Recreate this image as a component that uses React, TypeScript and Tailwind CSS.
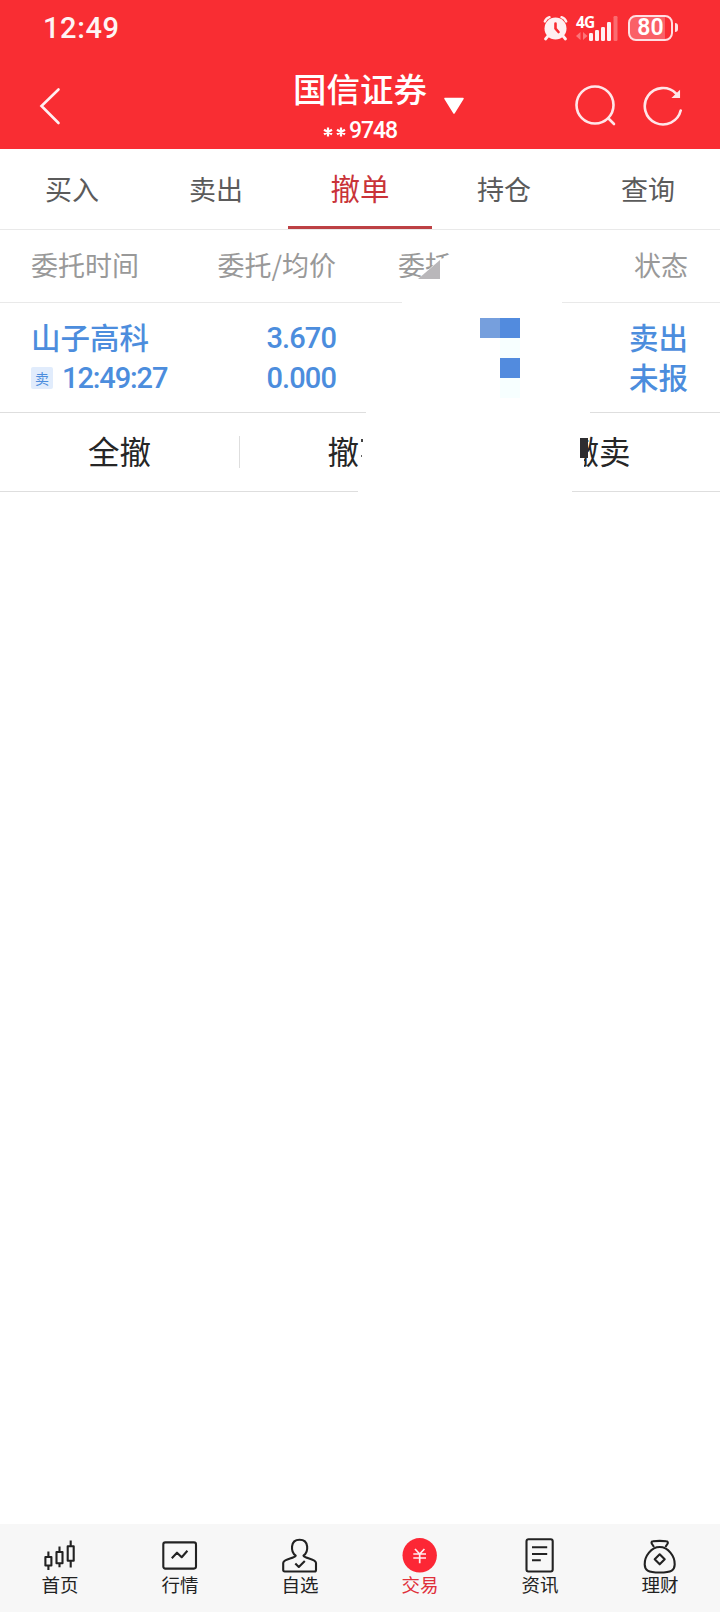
import React from 'react';

const TABS = ['买入', '卖出', '撤单', '持仓', '查询'];
const ACTIVE_TAB = '撤单';

const StatusBar: React.FC = () => (
  <div className="flex h-[55px] items-center pl-[43px] pr-[42px] text-white">
    <span className="mt-px font-[Roboto] text-[29px] font-medium leading-[29px] tracking-[0.6px] opacity-95">12:49</span>
    <div className="ml-auto flex items-center">
      <svg width="26" height="26" viewBox="0 0 26 26" fill="none" className="mr-[7px]">
        <circle cx="12.5" cy="13.5" r="11" fill="#fff0f2" />
        <path d="M1.8 6.5 Q3.2 3.2 6.5 2.2 M23.2 6.5 Q21.8 3.2 18.5 2.2" stroke="#fff0f2" strokeWidth="2.4" strokeLinecap="round" />
        <path d="M5 21 L2.5 24 M20 21 L22.5 24" stroke="#fff0f2" strokeWidth="2.8" strokeLinecap="round" />
        <path d="M12.5 8.5 V13.5 L15.5 17" stroke="#f92d33" strokeWidth="2.6" strokeLinecap="round" />
      </svg>
      <div className="relative mr-[9px] h-[26px] w-[43px]">
        <span className="absolute left-0 top-[-2px] font-['Open_Sans'] text-[15.5px] font-bold leading-[18px] tracking-[-0.8px]">4G</span>
        <svg width="43" height="26" viewBox="0 0 43 26" className="absolute inset-0">
          <path d="M4.5 17 V25 L0 21 Z M7 17 V25 L11.5 21 Z" fill="#fff" opacity=".35" />
          <g fill="#fff0f2">
            <rect x="13" y="18" width="4" height="8" rx="1.2" />
            <rect x="19" y="15" width="4" height="11" rx="1.2" />
            <rect x="25" y="12" width="4" height="14" rx="1.2" />
            <rect x="31" y="7" width="4" height="19" rx="1.2" />
          </g>
          <rect x="37.5" y="1" width="4" height="25" rx="1.2" fill="#fff" opacity=".3" />
        </svg>
      </div>
      <div className="flex h-[26px] w-[45px] items-center justify-center rounded-[8px] border-2 border-[#ffdfe2] bg-linear-to-r from-[#fa6067] from-85% to-[#f92d33] to-85% font-[Roboto] text-[23px] font-semibold leading-[22px]">
        80
      </div>
      <span className="ml-0.5 h-[9px] w-[3px] rounded-r-sm bg-[#ffdfe2]" />
    </div>
  </div>
);

const TitleBar: React.FC = () => (
  <div className="grid h-[94px] grid-cols-[240px_240px_240px] text-white">
    <svg width="24" height="40" viewBox="0 0 24 40" fill="none" className="ml-[38px] mt-[31px]">
      <path d="M20.5 3.5 L3.5 20 L20.5 37" stroke="#fff0f2" strokeWidth="2.6" strokeLinecap="round" />
    </svg>
    <div className="relative flex flex-col items-center">
      <h1 className="mt-[14px] text-[33.5px] font-medium leading-[38px]">国信证券</h1>
      <p className="mt-[12px] flex items-center font-[Roboto] text-[23px] font-medium leading-[24px] tracking-[-1.1px]">
        <svg width="24" height="10" viewBox="0 0 24 10" className="mr-[2px] mt-[2px]" stroke="#fff" strokeWidth="2.2">
          <path d="M5 0.5 V9.5 M1 2.7 L9 7.3 M9 2.7 L1 7.3 M18 0.5 V9.5 M14 2.7 L22 7.3 M22 2.7 L14 7.3" />
        </svg>
        9748
      </p>
      <svg width="22" height="18" viewBox="0 0 22 18" className="absolute left-[203px] top-[42px]">
        <path d="M2 1.5 H20 L11 16 Z" fill="#fff" stroke="#fff" strokeWidth="1.5" strokeLinejoin="round" />
      </svg>
    </div>
    <div className="flex pl-[94px] pt-[29px]">
      <svg width="44" height="44" viewBox="0 0 44 44" fill="none" stroke="#ffe6e9" strokeWidth="2.6" strokeLinecap="round">
        <circle cx="21" cy="21" r="18.5" />
        <path d="M34.5 34.5 L40 40" />
      </svg>
      <svg width="44" height="44" viewBox="0 0 44 44" fill="none" stroke="#ffe6e9" strokeWidth="2.6" strokeLinecap="round" className="ml-[24px]">
        <path d="M38.7 26.5 A18.2 18.2 0 1 1 34 9.5" />
        <path d="M37.3 7.5 V13.3 H31.3 Z" fill="#ffe6e9" strokeWidth="1.5" />
      </svg>
    </div>
  </div>
);

// Blanked-out order quantity, with the few mosaic blocks left on it
const Mask: React.FC = () => (
  <>
    <div className="absolute left-[402px] top-[302px] h-[2px] w-[160px] bg-white" />
    <div className="absolute left-[366px] top-[411px] h-[3px] w-[224px] bg-white" />
    <div className="absolute left-[359px] top-[430px] h-[50px] w-[225px] bg-white" />
    <div className="absolute left-[358px] top-[490px] h-[3px] w-[214px] bg-white" />
    <div className="absolute left-[361px] top-[439px] h-[3px] w-[2px] bg-[#444]" />
    <div className="absolute left-[361px] top-[455px] h-[2px] w-px bg-[#666]" />
    <div className="absolute left-[580px] top-[438px] h-5 w-2 bg-[#2d2d30]" />
    <svg width="60" height="34" viewBox="0 0 60 34" className="absolute left-[408px] top-[248px]">
      <path d="M10 31 L32 11 L42 8.5 L60 8.5 V34 H10 Z" fill="#fff" />
      <path d="M10 31 L32 12 V31 Z" fill="#b9b7ba" />
    </svg>
    <div className="absolute left-[480px] top-[318px] grid grid-cols-[20px_20px] grid-rows-[20px_20px_20px_20px]">
      <div className="bg-[#769fdd]" />
      <div className="bg-[#528bde]" />
      <div />
      <div className="bg-[#f7ffff]" />
      <div />
      <div className="bg-[#528bde]" />
      <div />
      <div className="bg-[#f7ffff]" />
    </div>
  </>
);

const NAV = [
  {
    label: '首页',
    icon: (
      <>
        <path d="M5.4 21 H11.4 V29.5 H5.4 Z M16.5 16 H22.5 V27.3 H16.5 Z M27.7 10.3 H33.7 V24.7 H27.7 Z" />
        <path d="M8.4 15.5 V21 M8.4 29.5 V34 M19.5 10.5 V16 M19.5 27.3 V31.3 M30.7 4.6 V10.3 M30.7 24.7 V31.6" />
      </>
    ),
  },
  {
    label: '行情',
    icon: (
      <>
        <rect x="3.3" y="6.4" width="32.7" height="26.2" rx="2" />
        <path d="M11.8 22.3 L17 16.7 L21.7 21.2 L27.4 14.7" />
      </>
    ),
  },
  {
    label: '自选',
    icon: (
      <>
        <path d="M15.7 19.6 C10.6 16 9.8 3.8 19.6 3.8 C29.4 3.8 28.6 16 23.5 19.6 C24.5 22.5 36 23 36 27 V34 Q36 35.5 34.5 35.5 H4.7 Q3.2 35.5 3.2 34 V27 C3.2 23 14.7 22.5 15.7 19.6 Z" />
        <path d="M15.3 27.5 L18.8 31 L24.8 25" />
      </>
    ),
  },
  {
    label: '交易',
    icon: (
      <>
        <circle cx="19.7" cy="19.3" r="17.2" fill="#fc2735" stroke="none" />
        <path d="M15 13 L19.7 18 L24.4 13 M19.7 18 V27.3 M13.3 18 H26 M13.3 22 H26" stroke="#fff0f2" strokeWidth="1.7" />
      </>
    ),
  },
  {
    label: '资讯',
    icon: (
      <>
        <rect x="6.5" y="3.2" width="26.2" height="32.3" rx="2" />
        <path d="M12 11.3 H27.2 M12 18 H27.2 M12 24.3 H20.8" />
      </>
    ),
  },
  {
    label: '理财',
    icon: (
      <>
        <path d="M14 11 L11.7 7.5 Q11 5.5 13 5.3 Q19.7 4.4 26.3 5.3 Q28.3 5.5 27.7 7.5 L25.4 11" />
        <path d="M19.7 11 C28 11 35 20 34.7 28.5 C34.5 34 32 36.5 19.7 36.5 C7.4 36.5 4.9 34 4.7 28.5 C4.4 20 11.4 11 19.7 11 Z" />
        <path d="M19.7 18.3 L24.7 23.3 L19.7 28.3 L14.7 23.3 Z" />
      </>
    ),
  },
];

const BottomNav: React.FC = () => (
  <nav className="mt-auto grid h-[88px] grid-cols-6 bg-[#f7f7f7] pt-3 text-[#222]">
    {NAV.map(({ label, icon }) => (
      <div key={label} className={`flex flex-col items-center ${label === '交易' ? 'text-[#e0303b]' : ''}`}>
        <svg width="40" height="40" viewBox="0 0 40 40" fill="none" stroke="currentColor" strokeWidth="2.1" strokeLinejoin="round">
          {icon}
        </svg>
        <span className="mt-[-2px] text-[18.5px] leading-[20px]">{label}</span>
      </div>
    ))}
  </nav>
);

export default function App() {
  return (
    <div className="relative flex h-[1612px] w-[720px] flex-col bg-white font-['Noto_Sans_CJK_SC',sans-serif]">
      <header className="h-[149px] shrink-0 bg-[#f92d33]">
        <StatusBar />
        <TitleBar />
      </header>

      <div className="grid h-[81px] grid-cols-5 border-b border-[#e9e9e9] text-center text-[27px] leading-[79px] text-[#5b5b5b]">
        {TABS.map(tab => (
          <div
            key={tab}
            className={tab === ACTIVE_TAB ? 'h-[80px] border-b-[3px] border-[#bd4144] text-[29.5px] leading-[77px] text-[#c93338]' : ''}
          >
            {tab}
          </div>
        ))}
      </div>

      <div className="grid h-[73px] grid-cols-[168px_168px_168px_184px] border-b border-[#e9e9e9] text-[27px] leading-[70px] text-[#999]">
        <span className="pl-[31px]">委托时间</span>
        <span className="text-right">委托/均价</span>
        <span className="pl-[62px]">委托</span>
        <span className="text-right">状态</span>
      </div>

      <div className="grid h-[110px] grid-cols-[240px_96px_352px] border-b border-[#dedede] pt-[13px] text-[29.5px] leading-[40px] text-[#4c8ddd]">
        <div className="pl-[31px]">
          <div className="font-medium">山子高科</div>
          <div className="flex items-center pt-[2px]">
            <span className="flex size-[22px] items-center justify-center rounded-[2px] bg-[#e1ecfc] text-[14px] leading-[20px]">卖</span>
            <span className="ml-[9px] font-[Roboto] text-[29px] font-medium tracking-[-1.1px]">12:49:27</span>
          </div>
        </div>
        <div className="pt-[2px] text-right font-[Roboto] text-[29px] font-medium tracking-[-0.9px]">
          <div>3.670</div>
          <div>0.000</div>
        </div>
        <div className="text-right font-medium">
          <div>卖出</div>
          <div>未报</div>
        </div>
      </div>

      <div className="grid h-[79px] grid-cols-3 items-center border-b border-[#dedede] text-center text-[31.5px] text-[#262626]">
        <div className="h-8 border-r border-[#dedede] leading-[29px]">全撤</div>
        <div className="h-8 pr-[2px] leading-[29px]">撤买</div>
        <div className="h-8 pr-[2px] leading-[29px]">撤卖</div>
      </div>

      <Mask />
      <BottomNav />
    </div>
  );
}
